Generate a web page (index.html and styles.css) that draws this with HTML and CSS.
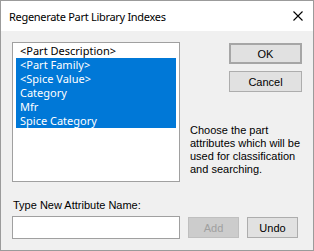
FILE: index.html
```html
<!DOCTYPE html>
<html>
<head>
<meta charset="utf-8">
<link rel="stylesheet" href="styles.css">
</head>
<body>
<div class="window">
  <div class="titlebar">
    <span class="title">Regenerate Part Library Indexes</span>
    <svg class="close" width="10" height="10" viewBox="0 0 10 10"><path d="M0.5 0.5 L9.5 9.5 M9.5 0.5 L0.5 9.5" stroke="#000" stroke-width="1.1" fill="none"/></svg>
  </div>
  <div class="content">
    <div class="top">
      <div class="list">
        <div class="item">&lt;Part Description&gt;</div>
        <div class="item sel">&lt;Part Family&gt;</div>
        <div class="item sel">&lt;Spice Value&gt;</div>
        <div class="item sel">Category</div>
        <div class="item sel">Mfr</div>
        <div class="item sel">Spice Category</div>
      </div>
      <div class="side">
        <button class="btn default">OK</button>
        <button class="btn cancel">Cancel</button>
        <p class="desc">Choose the part attributes which will be used for classification and searching.</p>
      </div>
    </div>
    <div class="label">Type New Attribute Name:</div>
    <div class="entry">
      <div class="input"></div>
      <button class="btn small disabled">Add</button>
      <button class="btn small">Undo</button>
    </div>
  </div>
</div>
</body>
</html>
```
FILE: styles.css
```css
html, body {
  margin: 0;
  padding: 0;
  background: #f0f0f0;
}
.window {
  width: 314px;
  height: 251px;
  box-sizing: border-box;
  border: 1px solid #9b9b9b;
  background: #f0f0f0;
  display: flex;
  flex-direction: column;
}
.titlebar {
  height: 30px;
  background: #ffffff;
  display: flex;
  align-items: center;
  justify-content: space-between;
  padding: 0 10px 0 8px;
}
.title {
  font-family: "Noto Sans", "Open Sans", sans-serif;
  font-size: 11px;
  letter-spacing: -0.3px;
  color: #000;
}
.close {
  display: block;
}
.content {
  padding: 11px 11px 0 11px;
  display: flex;
  flex-direction: column;
}
.top {
  display: flex;
}
.list {
  width: 168px;
  height: 140px;
  box-sizing: border-box;
  border: 1px solid #a0a0a0;
  background: #fff;
  padding: 1px 3px 0 3px;
}
.item {
  height: 14px;
  line-height: 14px;
  padding-left: 4px;
  font-family: "Noto Sans", "Open Sans", sans-serif;
  font-size: 11px;
  color: #000;
  white-space: nowrap;
}
.item.sel {
  background: #0078d7;
  color: #fff;
}
.side {
  flex: 1;
  margin-left: 10px;
  display: flex;
  flex-direction: column;
  align-items: flex-end;
}
.btn {
  box-sizing: border-box;
  height: 21px;
  width: 73px;
  background: #e1e1e1;
  border: 1px solid #adadad;
  font-family: "Liberation Sans", Arial, sans-serif;
  font-size: 11px;
  color: #000;
  padding: 0;
  margin: 0;
}
.btn.default {
  margin-top: 1px;
  border: 2px solid #a6a6a6;
}
.btn.cancel {
  margin-top: 7px;
}
.desc {
  align-self: stretch;
  margin: 32px 0 0 0;
  font-family: "Liberation Sans", Arial, sans-serif;
  font-size: 11px;
  line-height: 13px;
  color: #000;
}
.label {
  margin-top: 17px;
  font-family: "Liberation Sans", Arial, sans-serif;
  font-size: 11px;
  line-height: 13px;
  color: #000;
  padding-left: 1px;
}
.entry {
  margin-top: 4px;
  display: flex;
  align-items: flex-start;
}
.input {
  width: 168px;
  height: 23px;
  box-sizing: border-box;
  border: 1px solid #a0a0a0;
  background: #fff;
}
.btn.small {
  width: 51px;
  margin-top: 1px;
  margin-left: 8px;
}
.btn.disabled {
  background: #cccccc;
  border-color: #bfbfbf;
  color: #a0a0a0;
}
```
